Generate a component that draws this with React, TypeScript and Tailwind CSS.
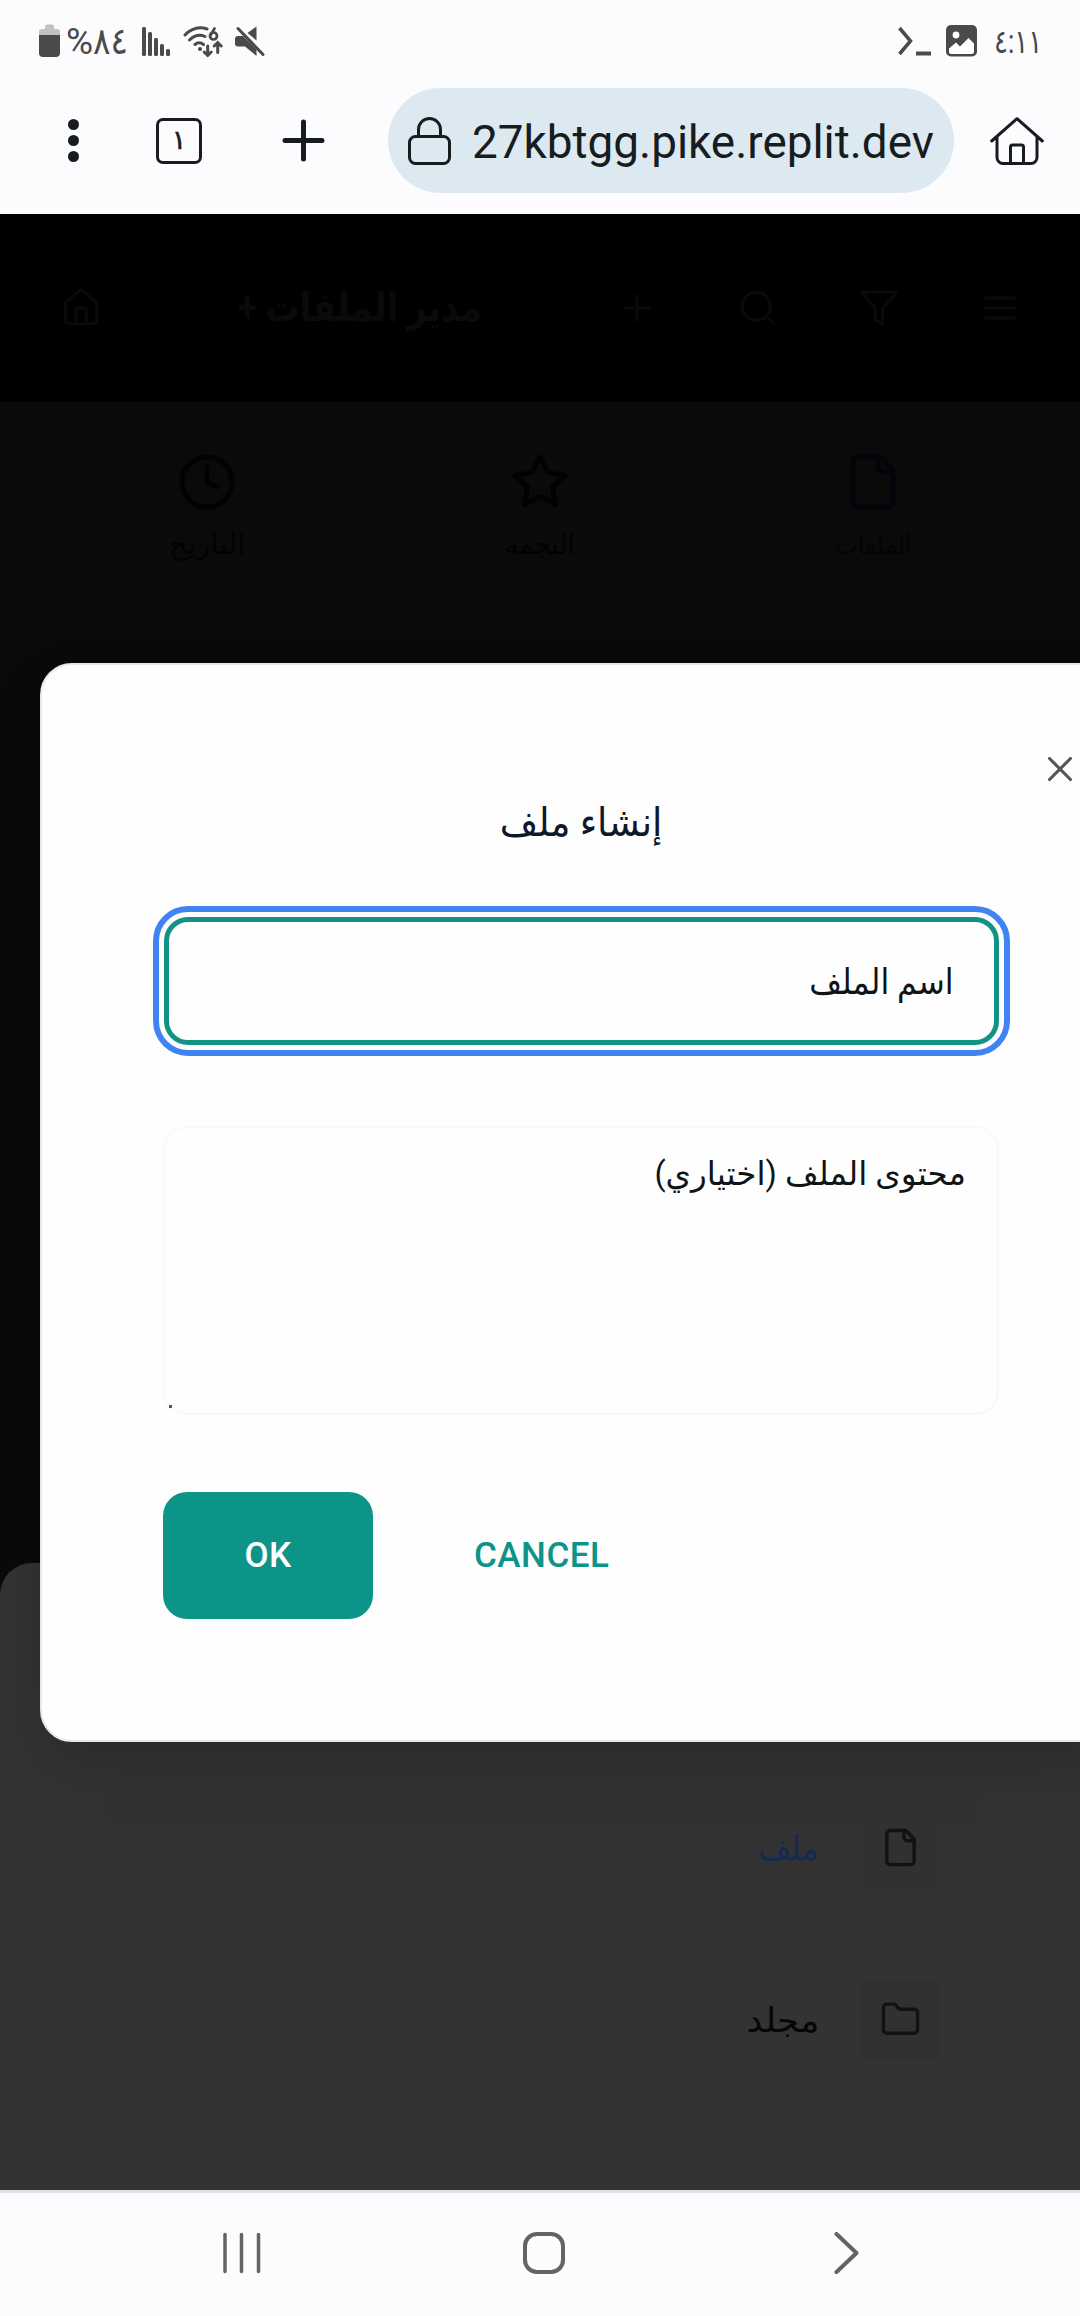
import React from "react";
import { Clock, Folder, House, Plus, Search, X } from "lucide-react";

type IconProps = { size?: number; strokeWidth?: number; className?: string };

function LineIcon({ size = 24, strokeWidth = 2, className, d }: IconProps & { d: string }) {
  return (
    <svg
      width={size}
      height={size}
      viewBox="0 0 24 24"
      fill="none"
      stroke="currentColor"
      strokeWidth={strokeWidth}
      strokeLinecap="round"
      strokeLinejoin="round"
      className={className}
    >
      <path d={d} />
    </svg>
  );
}

const MenuIcon = (p: IconProps) => <LineIcon {...p} d="M4 6.200h16M4 12h16M4 17.800h16" />;
const FilterIcon = (p: IconProps) => <LineIcon {...p} d="M22 3H2l8 9.460V19l4 2v-8.540L22 3z" />;
const FileIcon = (p: IconProps) => (
  <LineIcon {...p} d="M15 2H6a2 2 0 0 0-2 2v16a2 2 0 0 0 2 2h12a2 2 0 0 0 2-2V7zM14 2v4a2 2 0 0 0 2 2h4" />
);
const StarIcon = (p: IconProps) => (
  <LineIcon
    {...p}
    d="M12 2l3.090 6.260L22 9.270l-5 4.870 1.180 6.880L12 17.770l-6.180 3.250L7 14.140 2 9.270l6.910-1.010z"
  />
);

function StatusBar() {
  return (
    <div className="flex h-[82px] items-center justify-between pr-[40px] pl-[39px] text-[#4a4a4a]">
      <div className="flex h-[34px] items-center">
        <svg width="21" height="34" viewBox="0 0 21 34">
          <path d="M6 2.500a2 2 0 0 1 2-2h5a2 2 0 0 1 2 2V5h3a3 3 0 0 1 3 3v4H0V8a3 3 0 0 1 3-3h3z" fill="#c2c2c2" />
          <path d="M0 11h21v18a4 4 0 0 1-4 4H4a4 4 0 0 1-4-4z" fill="currentColor" />
        </svg>
        <span className="ml-[6px] flex w-[61px] items-center pt-[2px] leading-[34px] whitespace-nowrap" dir="ltr">
          <span className="text-[37px]">%</span>
          <span className="origin-left scale-x-[0.88] text-[37px]">٨٤</span>
        </span>
        <svg className="ml-[15px]" width="28" height="34" viewBox="0 0 28 34" fill="currentColor">
          <rect x="0" y="3" width="4" height="29" rx="1.500" />
          <rect x="6" y="8" width="4" height="24" rx="1.500" />
          <rect x="12" y="14" width="4" height="18" rx="1.500" />
          <rect x="18" y="20" width="4" height="12" rx="1.500" />
          <rect x="24" y="25" width="4" height="7" rx="1.500" />
        </svg>
        <svg className="mt-[2px] ml-[13px]" width="40" height="34" viewBox="0 0 40 34" fill="none" stroke="currentColor" strokeWidth="3" strokeLinecap="round">
          <path d="M2 10Q12 0 24 4M6.500 15Q14 8 22 11.500M12 19.500q4-3.500 8.500 0" />
          <circle cx="17" cy="24" r="2" fill="currentColor" stroke="none" />
          <path d="M24.700 21v9.500M21.200 27l3.500 3.500 3.500-3.500M34.700 27.500v-10M31.200 21l3.500-3.500 3.500 3.500" strokeWidth="3" />
          <path d="M31.500 3.500L28 9.500" strokeWidth="2.700" />
          <circle cx="30.500" cy="11" r="3.500" strokeWidth="2.700" />
        </svg>
        <svg className="mt-[1px] ml-[12px]" width="30" height="34" viewBox="0 0 30 34" fill="currentColor">
          <path d="M21.500 1.500v14L12.500 8zM3 11h5l13.500 13.500V31L10 21.500H3a3 3 0 0 1-3-3V14a3 3 0 0 1 3-3z" />
          <path d="M5 2.500 28 26.500" stroke="#fcfcff" strokeWidth="3" />
          <path d="M3 3.500 28 29.500" stroke="currentColor" strokeWidth="3" strokeLinecap="round" />
        </svg>
      </div>
      <div className="flex h-[34px] items-center">
        <svg width="33" height="34" viewBox="0 0 33 34" fill="none" stroke="currentColor">
          <path d="M1.500 4 12.500 17 1.500 30" strokeWidth="3.500" />
          <path d="M18 29.500h15" strokeWidth="4" />
        </svg>
        <svg className="ml-[15px]" width="31" height="32" viewBox="0 0 31 32">
          <rect width="31" height="31.500" rx="5" fill="currentColor" />
          <circle cx="10" cy="10" r="3.400" fill="#fff" />
          <path d="M3 23.500 10 17.500 14 21.500 22.500 13 28 18.500v8.500a2 2 0 0 1-2 2H5a2 2 0 0 1-2-2z" fill="#fff" />
        </svg>
        <span className="ml-[17px] w-[46px] origin-left scale-x-[0.79] pt-[2px] text-[33px] leading-[34px] whitespace-nowrap" dir="ltr">
          ٤:١١
        </span>
      </div>
    </div>
  );
}

function BrowserBar() {
  return (
    <div className="flex h-[132px] items-start pt-[6px] text-[#171c1f]">
      <div className="flex h-[105px] w-full items-center pl-[68px]">
        <div className="flex w-[11px] flex-col gap-[5px]">
          <i className="size-[11px] rounded-full bg-[#171c1f]" />
          <i className="size-[11px] rounded-full bg-[#171c1f]" />
          <i className="size-[11px] rounded-full bg-[#171c1f]" />
        </div>
        <div className="ml-[77px] flex size-[46px] items-center justify-center rounded-[7px] border-[3px] border-[#171c1f] text-[27px] leading-none [-webkit-text-stroke:0.6px_#171c1f]">
          ١
        </div>
        <svg className="ml-[80px]" width="43" height="43" viewBox="0 0 43 43" stroke="currentColor" strokeWidth="5" strokeLinecap="round">
          <path d="M21.500 3v37M3 21.500h37" />
        </svg>
        <div className="ml-[63px] flex h-[105px] w-[566px] items-center rounded-full bg-[#dde9f1] pl-[20px]">
          <svg width="43" height="48" viewBox="0 0 43 48" fill="none" stroke="currentColor" strokeWidth="3">
            <rect x="1.500" y="19.500" width="40" height="27" rx="6" />
            <path d="M10.500 19V12.500a11 11 0 0 1 22 0V19" />
          </svg>
          <span className="mt-[2px] ml-[21px] origin-left scale-x-[0.997] text-[46px] leading-[54px] whitespace-nowrap">27kbtgg.pike.replit.dev</span>
        </div>
        <svg className="ml-[36px]" width="54" height="48" viewBox="0 0 54 48" fill="none" stroke="currentColor" strokeWidth="3" strokeLinecap="round" strokeLinejoin="round">
          <path d="M1.700 24 27 1.700 52.300 24M7 20v20.500a6 6 0 0 0 6 6h28a6 6 0 0 0 6-6V20M20.500 46V30a2 2 0 0 1 2-2h9a2 2 0 0 1 2 2v16" />
        </svg>
      </div>
    </div>
  );
}

function AppHeader() {
  return (
    <div className="flex h-[188px] items-center bg-black pl-[60px] text-[#0a0a0a]">
      <House size={42} strokeWidth={1.800} />
      <h1 className="ml-[137px] w-[243px] origin-right scale-x-[0.855] text-[40px] leading-[60px] font-bold whitespace-nowrap" dir="rtl">
        مدير الملفات +
      </h1>
      <div className="ml-[134px] flex gap-[79px]">
        <Plus size={42} strokeWidth={1.800} />
        <Search size={42} strokeWidth={1.800} />
        <FilterIcon size={42} strokeWidth={1.800} />
        <MenuIcon size={42} strokeWidth={1.800} />
      </div>
    </div>
  );
}

function Tab({ icon: Icon, label, tone, fit }: { icon: React.ComponentType<IconProps>; label: string; tone: string; fit: string }) {
  return (
    <div className={"flex w-[333px] flex-col items-center " + tone}>
      <Icon size={60} strokeWidth={2} />
      <span className={"mt-[11px] text-[28px] leading-[44px] whitespace-nowrap " + fit} dir="rtl">
        {label}
      </span>
    </div>
  );
}

function SheetRow({ icon: Icon, label, box, tone }: { icon: React.ComponentType<IconProps>; label: string; box: string; tone: string }) {
  return (
    <div className={"flex h-[141px] w-[880px] items-center justify-end rounded-[24px] pr-[41px] " + box}>
      <span className={"origin-right text-[34px] leading-[50px] whitespace-nowrap " + tone} dir="rtl">
        {label}
      </span>
      <div className="ml-[41px] flex size-[81px] items-center justify-center rounded-[11px] bg-[#313131] pr-[1px]">
        <Icon size={41} strokeWidth={2} className="text-[#101216]" />
      </div>
    </div>
  );
}

function CreateFileDialog() {
  return (
    <div className="absolute top-[449px] left-[40px] flex h-[1079px] w-[1082px] flex-col rounded-[32px] border-2 border-[#e4e9ee] bg-[#fefefe] px-[121px] shadow-[0_26px_66px_-8px_rgba(0,0,0,0.2)]">
      <X className="mt-[83px] ml-[876px] shrink-0 text-[#55565a]" size={42} strokeWidth={1.800} />
      <h2 className="mt-[3px] scale-x-[0.93] text-center text-[40px] leading-[60px] whitespace-nowrap text-[#0f172a]" dir="rtl">
        إنشاء ملف
      </h2>
      <div
        className="mt-[64px] ml-px flex h-[128px] items-center rounded-[24px] border-[5px] border-[#119284] px-[41px] pt-[5px] text-[35px] whitespace-nowrap text-[#0f1417] outline-[6px] outline-offset-[5.5px] outline-[#4084f3]"
        dir="rtl"
      >
        <span className="origin-right scale-x-[0.905]">اسم الملف</span>
      </div>
      <div
        className="relative mt-[81px] h-[289px] rounded-[24px] border-2 border-[#f8f9fa] px-[31px] pt-[22px] text-[32.600px] leading-[48px] whitespace-nowrap text-[#0f1417]"
        dir="rtl"
      >
        محتوى الملف (اختياري)
        <i className="absolute bottom-[5px] left-[4px] size-[3px] bg-[#555]" />
      </div>
      <div className="mt-[77px] flex h-[127px] items-center font-medium">
        <button className="h-[127px] w-[210px] rounded-[24px] bg-[#0d9488] pt-[2px] text-[35px] tracking-[0.4px] text-white">OK</button>
        <button className="ml-[101px] pt-[2px] text-[35px] tracking-[0.5px] text-[#0d9488]">CANCEL</button>
      </div>
    </div>
  );
}

function NavBar() {
  return (
    <div className="h-[126px] border-t-[3px] border-[#dde3eb] bg-[#fcfcff]">
      <div className="flex h-[120px] items-center pl-[222px]">
        <svg width="39" height="42" viewBox="0 0 39 42" stroke="#636466" strokeWidth="3.500" strokeLinecap="round">
          <path d="M3 2.500v37M19.500 2.500v37M36.500 2.500v37" />
        </svg>
        <svg className="ml-[262px]" width="42" height="42" viewBox="0 0 42 42" fill="none" stroke="#636466" strokeWidth="4">
          <rect x="2" y="2" width="38" height="38" rx="12" />
        </svg>
        <svg className="ml-[269px]" width="25" height="42" viewBox="0 0 25 42" fill="none" stroke="#636466" strokeWidth="4" strokeLinecap="round" strokeLinejoin="round">
          <path d="M2.500 2 22.500 21 2.500 40" />
        </svg>
      </div>
    </div>
  );
}

export default function App() {
  return (
    <div className="flex h-[2316px] w-[1080px] flex-col overflow-hidden bg-[#fcfcff] font-[Roboto,'DejaVu_Sans',sans-serif]">
      <StatusBar />
      <BrowserBar />
      <main className="relative flex h-[1976px] flex-col overflow-hidden bg-[#0a0a0a]">
        <AppHeader />
        <div className="flex h-[176px] justify-center border-b border-[#070707] pt-[50px]">
          <Tab icon={Clock} label="التاريخ" tone="text-[#020202]" fit="scale-x-[1.05]" />
          <Tab icon={StarIcon} label="النجمة" tone="text-[#020202]" fit="scale-x-[0.94]" />
          <Tab icon={FileIcon} label="الملفات" tone="text-[#02040a]" fit="scale-x-[0.84]" />
        </div>
        <div className="mt-auto flex h-[627px] flex-col gap-[31px] rounded-t-[32px] bg-[#333] pt-[214px] pl-[102px]">
          <SheetRow icon={FileIcon} label="ملف" box="bg-[#323232]" tone="scale-x-[0.94] text-[#132a54]" />
          <SheetRow icon={Folder} label="مجلد" box="" tone="scale-x-[1.05] text-[#050607]" />
        </div>
        <CreateFileDialog />
      </main>
      <NavBar />
    </div>
  );
}
